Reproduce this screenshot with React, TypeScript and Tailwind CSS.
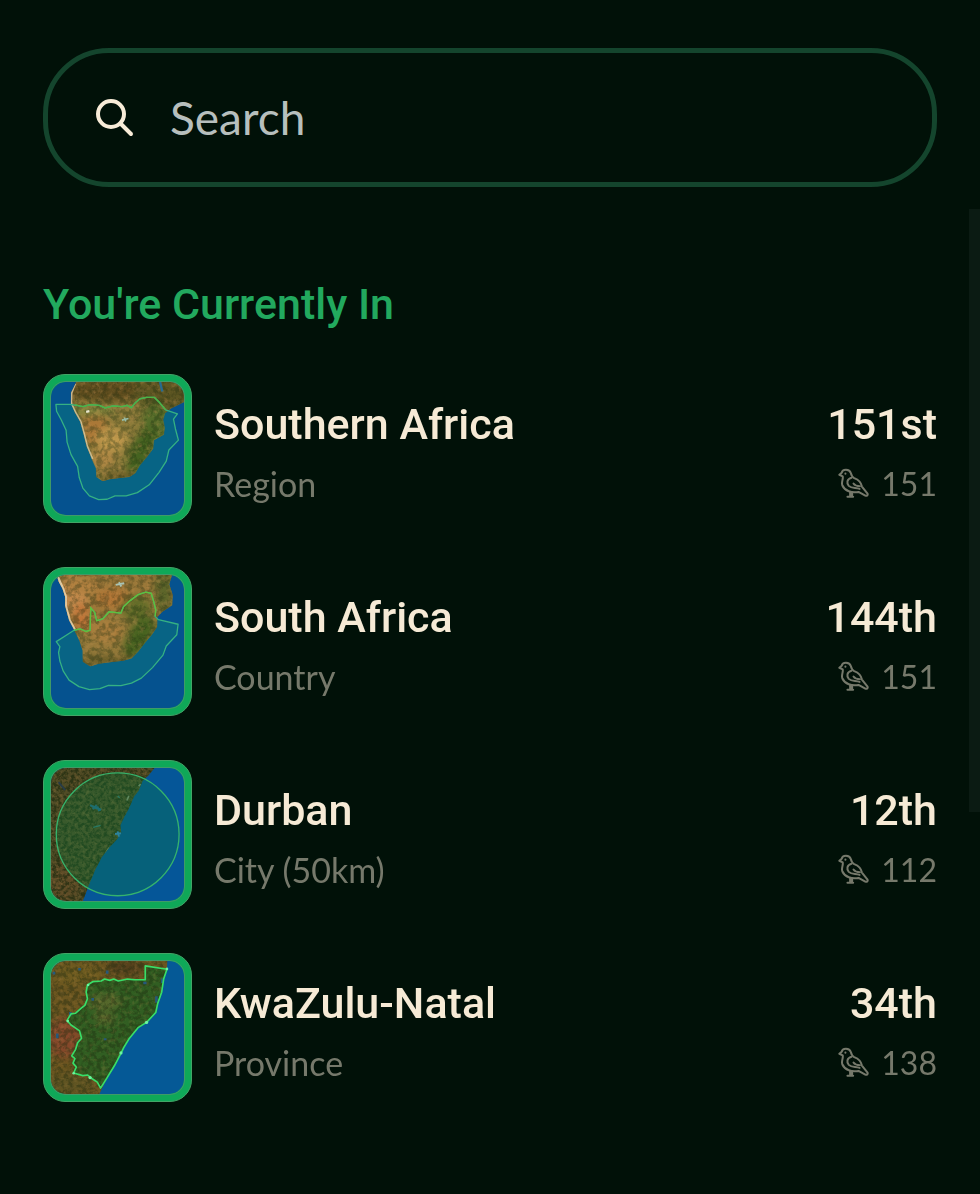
import type { ReactNode } from "react";

type Place = {
  name: string;
  kind: string;
  rank: string;
  birds: number;
  map: ReactNode;
};

/* soil and vegetation speckle laid over the land shapes */
function Grain({ id, freq, seed }: { id: string; freq: string; seed: number }) {
  return (
    <>
      <filter id={`${id}-dark`} x="0" y="0" width="100%" height="100%" colorInterpolationFilters="sRGB">
        <feTurbulence type="fractalNoise" baseFrequency={freq} numOctaves={4} seed={seed} />
        <feColorMatrix values="0 0 0 0 0.12  0 0 0 0 0.17  0 0 0 0 0.06  4 0 0 0 -1.6" />
      </filter>
      <filter id={`${id}-light`} x="0" y="0" width="100%" height="100%" colorInterpolationFilters="sRGB">
        <feTurbulence type="fractalNoise" baseFrequency={freq} numOctaves={4} seed={seed + 7} />
        <feColorMatrix values="0 0 0 0 0.72  0 0 0 0 0.54  0 0 0 0 0.3  0 3 0 0 -1.5" />
      </filter>
      <filter id={`${id}-soft`} x="-50%" y="-50%" width="200%" height="200%" colorInterpolationFilters="sRGB">
        <feGaussianBlur stdDeviation="12" />
      </filter>
    </>
  );
}

const MAP_CLASS = "block h-full w-full rounded-[15px]";

function SouthernAfricaMap() {
  const land =
    "M140 60 L133 76 L122 98 L121 130 L134 158 L150 186 L160 222 L170 262 L186 300 L198 328 L199 354 L218 367 L240 361 L270 357 L300 354 L318 342 L332 318 L352 294 L372 268 L374 242 L404 226 L407 205 L402 180 L408 160 L426 146 L470 124 L470 60 Z";
  const zone =
    "M76 133 L120 133 L158 140 L180 134 L208 136 L226 144 L250 138 L278 140 L292 136 L306 143 L316 130 L332 116 L352 112 L376 112 L390 126 L410 150 L446 162 L434 178 L440 208 L449 242 L420 272 L412 306 L390 340 L360 378 L324 402 L290 412 L256 412 L232 422 L206 423 L178 412 L158 388 L147 356 L142 322 L122 286 L110 248 L107 212 L92 180 L78 154 Z";
  return (
    <svg viewBox="61 65 405 405" className={MAP_CLASS} aria-hidden="true">
      <defs>
        <Grain id="sa" freq="0.06" seed={3} />
        <clipPath id="sa-land"><path d={land} /></clipPath>
      </defs>
      <rect x="61" y="65" width="405" height="405" fill="#05528f" />
      <path d={zone} fill="#066188" />
      <g clipPath="url(#sa-land)">
        <rect x="61" y="60" width="410" height="410" fill="#917a3a" />
        <g filter="url(#sa-soft)">
          <ellipse cx="230" cy="90" rx="130" ry="35" fill="#5f4d1e" />
          <ellipse cx="400" cy="100" rx="90" ry="55" fill="#5d5622" />
          <ellipse cx="380" cy="190" rx="42" ry="60" fill="#566a28" />
          <ellipse cx="335" cy="275" rx="32" ry="75" fill="#46601f" transform="rotate(25 335 275)" />
          <ellipse cx="195" cy="205" rx="40" ry="55" fill="#b07637" />
          <ellipse cx="245" cy="240" rx="48" ry="38" fill="#c4984c" />
          <ellipse cx="215" cy="300" rx="42" ry="30" fill="#b48644" />
          <ellipse cx="190" cy="152" rx="65" ry="15" fill="#86883f" />
          <ellipse cx="270" cy="352" rx="60" ry="10" fill="#64501f" />
        </g>
        <rect x="61" y="60" width="410" height="410" filter="url(#sa-dark)" opacity="0.35" />
        <rect x="61" y="60" width="410" height="410" filter="url(#sa-light)" opacity="0.4" />
        <path d="M133 70 L122 98 L121 130 L134 158 L150 186 L160 222 L170 262 L186 300" fill="none" stroke="#ead6b2" strokeWidth="9" opacity="0.75" />
        <path d="M393 65 L400 94" stroke="#256a91" strokeWidth="7" />
        <path d="M277 181 L297 176 M284 173 L289 185" stroke="#9cbcaa" strokeWidth="5" />
        <path d="M168 156 L178 154" stroke="#f3ead6" strokeWidth="7" />
      </g>
      <path d={zone} fill="#35a64a" fillOpacity="0.04" stroke="#35b183" strokeWidth="4" strokeLinejoin="round" />
      <path d="M134 134 L158 140 L180 134 L208 136 L226 144 L250 138 L278 140 L292 136 L306 143 L316 130 L332 116 L352 112 L376 112 L390 126 L410 150" fill="none" stroke="#4eb443" strokeWidth="4" />
    </svg>
  );
}

function SouthAfricaMap() {
  const land =
    "M76 60 L84 88 L96 110 L104 134 L104 162 L116 206 L132 236 L148 270 L157 298 L158 332 L181 347 L206 338 L240 334 L280 329 L306 322 L326 302 L346 276 L368 250 L384 226 L385 196 L400 180 L430 160 L432 130 L421 96 L432 60 Z";
  const zone =
    "M77 271 L130 237 L150 232 L168 240 L180 236 L182 168 L194 182 L200 207 L218 202 L238 180 L274 184 L282 164 L302 146 L326 128 L350 120 L366 124 L374 150 L380 174 L378 194 L388 204 L448 218 L444 250 L412 284 L402 312 L370 350 L336 382 L306 397 L274 405 L236 404 L210 414 L178 417 L146 408 L116 388 L98 360 L88 330 L84 304 L88 286 Z";
  return (
    <svg viewBox="61 68 405 405" className={MAP_CLASS} aria-hidden="true">
      <defs>
        <Grain id="za" freq="0.055" seed={11} />
        <clipPath id="za-land"><path d={land} /></clipPath>
      </defs>
      <rect x="61" y="68" width="405" height="405" fill="#05528f" />
      <path d={zone} fill="#066188" />
      <g clipPath="url(#za-land)">
        <rect x="61" y="60" width="410" height="410" fill="#9a7839" />
        <g filter="url(#za-soft)">
          <ellipse cx="130" cy="130" rx="45" ry="60" fill="#c48a4c" />
          <ellipse cx="160" cy="100" rx="60" ry="25" fill="#b0803f" />
          <ellipse cx="250" cy="140" rx="55" ry="30" fill="#b27636" />
          <ellipse cx="155" cy="195" rx="26" ry="40" fill="#c07538" />
          <ellipse cx="230" cy="240" rx="50" ry="35" fill="#b17d3c" />
          <ellipse cx="320" cy="170" rx="45" ry="38" fill="#646a26" />
          <ellipse cx="330" cy="255" rx="34" ry="70" fill="#48601e" transform="rotate(32 330 255)" />
          <ellipse cx="405" cy="115" rx="28" ry="70" fill="#5d662a" />
          <ellipse cx="230" cy="327" rx="75" ry="10" fill="#5c501f" />
        </g>
        <rect x="61" y="60" width="410" height="410" filter="url(#za-dark)" opacity="0.35" />
        <rect x="61" y="60" width="410" height="410" filter="url(#za-light)" opacity="0.4" />
        <path d="M78 70 L96 110 L104 134 L104 162 L116 206 L132 236" fill="none" stroke="#f0dcb8" strokeWidth="11" opacity="0.8" />
        <path d="M258 98 L284 93 M268 90 L275 103" stroke="#a9c3b4" strokeWidth="6" />
      </g>
      <path d={zone} fill="#35a64a" fillOpacity="0.05" stroke="#35b183" strokeWidth="4" strokeLinejoin="round" />
      <path d="M132 236 L150 232 L168 240 L180 236 L182 168 L194 182 L200 207 L218 202 L238 180 L274 184 L282 164 L302 146 L326 128 L350 120 L366 124 L374 150 L380 174 L378 194" fill="none" stroke="#62c03b" strokeWidth="4" />
    </svg>
  );
}

function DurbanMap() {
  const land =
    "M55 60 L380 60 L358 88 L340 104 L328 134 L314 152 L298 188 L284 214 L272 240 L275 262 L262 282 L238 308 L216 336 L196 374 L176 422 L156 475 L55 475 Z";
  return (
    <svg viewBox="61 65 405 405" className={MAP_CLASS} aria-hidden="true">
      <defs>
        <Grain id="db" freq="0.09" seed={21} />
        <clipPath id="db-land"><path d={land} /></clipPath>
      </defs>
      <rect x="61" y="65" width="405" height="405" fill="#055698" />
      <g clipPath="url(#db-land)">
        <rect x="55" y="60" width="410" height="415" fill="#504c26" />
        <g filter="url(#db-soft)">
          <ellipse cx="90" cy="420" rx="60" ry="60" fill="#5e4c27" />
          <ellipse cx="200" cy="90" rx="140" ry="20" fill="#4f4a24" />
        </g>
        <rect x="55" y="60" width="410" height="415" filter="url(#db-dark)" opacity="0.7" />
        <rect x="55" y="60" width="410" height="415" filter="url(#db-light)" opacity="0.25" />
        <path d="M180 178 L196 186 L214 192 M188 190 L200 178 M202 182 L208 196" stroke="#26698a" strokeWidth="6" />
        <path d="M190 246 L212 240 M264 150 L270 156" stroke="#397c7a" strokeWidth="4" />
        <path d="M84 108 L104 132" stroke="#283c45" strokeWidth="6" />
        <path d="M298 150 L292 164 M328 120 L334 114 M238 308 L228 324" stroke="#8a8f70" strokeWidth="5" />
      </g>
      <circle cx="264" cy="267" r="187" fill="#0a7a3a" fillOpacity="0.32" stroke="#35b36c" strokeWidth="4" />
      <path d="M256 266 L274 264 M264 258 L268 274" stroke="#2c829c" strokeWidth="6" />
    </svg>
  );
}

function KwaZuluMap() {
  const land =
    "M55 60 L416 60 L414 90 L404 120 L398 160 L386 194 L380 222 L352 252 L326 268 L300 300 L284 326 L274 346 L254 384 L232 420 L206 475 L55 475 Z";
  const province =
    "M348 80 L414 90 L404 120 L398 160 L386 194 L380 222 L352 252 L326 268 L300 300 L284 326 L274 346 L254 384 L232 420 L212 452 L202 434 L184 422 L172 412 L158 414 L130 406 L138 388 L128 376 L134 362 L124 354 L136 334 L142 314 L154 300 L148 278 L134 268 L122 260 L110 246 L122 226 L136 224 L154 208 L164 200 L172 180 L168 160 L172 138 L188 128 L214 126 L224 120 L240 124 L252 120 L266 126 L294 120 L316 122 L348 122 Z";
  return (
    <svg viewBox="61 65 405 405" className={MAP_CLASS} aria-hidden="true">
      <defs>
        <Grain id="kz" freq="0.07" seed={34} />
        <clipPath id="kz-land"><path d={land} /></clipPath>
      </defs>
      <rect x="61" y="65" width="405" height="405" fill="#055996" />
      <g clipPath="url(#kz-land)">
        <rect x="55" y="60" width="410" height="415" fill="#6b5620" />
        <g filter="url(#kz-soft)">
          <ellipse cx="100" cy="300" rx="50" ry="62" fill="#84482a" />
          <ellipse cx="140" cy="105" rx="80" ry="30" fill="#6f5c20" />
          <ellipse cx="290" cy="85" rx="60" ry="22" fill="#54401d" />
          <ellipse cx="120" cy="440" rx="80" ry="28" fill="#5f5422" />
        </g>
        <path d={province} fill="#315e22" />
        <g filter="url(#kz-soft)">
          <ellipse cx="225" cy="190" rx="50" ry="26" fill="#56682c" />
          <ellipse cx="225" cy="240" rx="30" ry="16" fill="#5e6a2e" />
        </g>
        <rect x="55" y="60" width="410" height="415" filter="url(#kz-dark)" opacity="0.4" />
        <rect x="55" y="60" width="410" height="415" filter="url(#kz-light)" opacity="0.22" />
        <path d="M70 98 v8 M144 90 h8 M232 94 v10 M120 220 v12 M80 286 v14 M342 132 h10 M382 172 v20 M226 300 v6 M400 118 v14 M188 178 v8" stroke="#25597b" strokeWidth="8" />
      </g>
      <path d={province} fill="none" stroke="#38de68" strokeWidth="5" strokeLinejoin="round" />
      <g fill="#6cf5a0">
        <circle cx="352" cy="252" r="5" />
        <circle cx="274" cy="345" r="5" />
        <circle cx="414" cy="89" r="4" />
        <circle cx="180" cy="420" r="5" />
        <circle cx="130" cy="407" r="4" />
        <circle cx="112" cy="248" r="4" />
        <circle cx="174" cy="138" r="4" />
      </g>
    </svg>
  );
}

function BirdIcon() {
  return (
    <svg viewBox="58 26 92 92" className="size-[31px]" fill="none" stroke="currentColor" strokeWidth="6" strokeLinecap="round" strokeLinejoin="round" aria-hidden="true">
      <path d="M69 40 C71 28 92 28 96 41 C98 49 100 53 106 56 C119 61 127 70 129 81 L145 101 C148 106 144 110 139 108 L119 97 C99 101 78 94 71 78 C67 68 74 60 72 51 L62 46 Z" />
      <path d="M98 55 C84 59 83 71 90 79 C98 87 110 84 122 88" />
      <path d="M104 72 C108 78 115 80 123 80" />
      <path d="M94 97 V108 M100 98 V110 M86 111 H103" />
      <path d="M80 42 v1" />
    </svg>
  );
}

function SearchIcon() {
  return (
    <svg viewBox="0 0 38 38" className="size-[38px]" fill="none" stroke="currentColor" strokeWidth="4" strokeLinecap="round" aria-hidden="true">
      <circle cx="15" cy="15" r="13" />
      <path d="M25 25 L35 35" />
    </svg>
  );
}

const places: Place[] = [
  { name: "Southern Africa", kind: "Region", rank: "151st", birds: 151, map: <SouthernAfricaMap /> },
  { name: "South Africa", kind: "Country", rank: "144th", birds: 151, map: <SouthAfricaMap /> },
  { name: "Durban", kind: "City (50km)", rank: "12th", birds: 112, map: <DurbanMap /> },
  { name: "KwaZulu-Natal", kind: "Province", rank: "34th", birds: 138, map: <KwaZuluMap /> },
];

function PlaceRow({ place }: { place: Place }) {
  return (
    <li className="flex items-center gap-[22px]">
      <div className="size-[149px] shrink-0 rounded-[22px] border border-[#42a566] bg-[#0fa858] p-[6px]">
        <div className="h-full w-full overflow-hidden rounded-[15px] border border-[#3f9a68]">{place.map}</div>
      </div>
      <div className="min-w-0 flex-1 pt-1.5">
        <h3 className="text-[43px] leading-[64px] font-medium text-[#f6ead5]">{place.name}</h3>
        <p className="font-['Lato','Liberation_Sans',sans-serif] text-[34px] leading-[56px] text-[#76796b]">{place.kind}</p>
      </div>
      <div className="pt-1.5 text-right">
        <div className="text-[43px] leading-[64px] font-medium text-[#f6ead5]">{place.rank}</div>
        <div className="flex items-center justify-end gap-3 font-['Lato','Liberation_Sans',sans-serif] text-[32px] leading-[56px] text-[#76796b]">
          <BirdIcon />
          {place.birds}
        </div>
      </div>
    </li>
  );
}

export default function App() {
  return (
    <div className="relative min-h-screen bg-[#011108] px-[43px] pt-12 pb-[92px] font-['Roboto','Liberation_Sans',sans-serif]">
      {/* search */}
      <label className="flex h-[139px] items-center gap-9 rounded-[66px] border-5 border-[#14452d] px-12 text-[#f8ecd8]">
        <SearchIcon />
        <input
          type="text"
          placeholder="Search"
          aria-label="Search"
          className="min-w-0 flex-1 bg-transparent font-['Lato','Liberation_Sans',sans-serif] text-[46px] leading-[60px] outline-none placeholder:text-[#b7bfbd]"
        />
      </label>

      {/* current places */}
      <h2 className="mt-[87px] text-[43px] leading-[60px] font-medium text-[#22a95e]">You're Currently In</h2>
      <ul className="mt-10 flex flex-col gap-11">
        {places.map((place) => (
          <PlaceRow key={place.name} place={place} />
        ))}
      </ul>

      {/* scroll thumb */}
      <div className="absolute top-[209px] right-0 h-[603px] w-[11px] bg-[#0b1b13]" />
    </div>
  );
}
